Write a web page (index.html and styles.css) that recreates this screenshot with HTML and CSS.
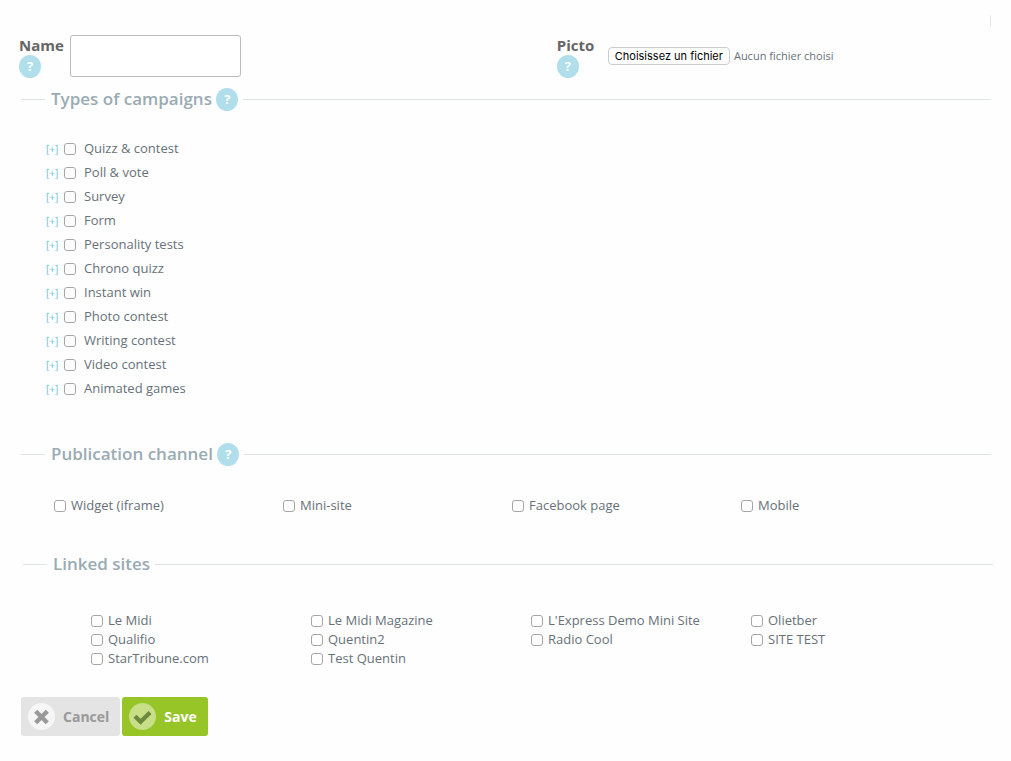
FILE: index.html
```
<!DOCTYPE html>
<html lang="en">
<head>
    <meta charset="UTF-8">
    <meta name="viewport" content="width=device-width, initial-scale=1.0">
    <title>Campaign category</title>
    <link rel="stylesheet" href="styles.css">
</head>
<body>
    <div class="corner"></div>
    <form id="categoryForm">
        <div class="top-row">
            <div class="field">
                <div class="field-label">
                    <label for="name">Name</label>
                    <button type="button" class="help">?</button>
                </div>
                <input type="text" id="name" name="name" class="name-input">
            </div>
            <div class="field">
                <div class="field-label">
                    <label for="picto">Picto</label>
                    <button type="button" class="help">?</button>
                </div>
                <div class="file">
                    <input type="file" id="picto" name="picto" class="file-input">
                    <button type="button" id="pictoButton" class="file-button">Choisissez un fichier</button>
                    <span id="pictoName" class="file-name">Aucun fichier choisi</span>
                </div>
            </div>
        </div>

        <fieldset class="types">
            <legend>Types of campaigns <button type="button" class="help">?</button></legend>
            <ul class="type-list">
                <li><a href="#">[+]</a><label><input type="checkbox" name="type">Quizz &amp; contest</label></li>
                <li><a href="#">[+]</a><label><input type="checkbox" name="type">Poll &amp; vote</label></li>
                <li><a href="#">[+]</a><label><input type="checkbox" name="type">Survey</label></li>
                <li><a href="#">[+]</a><label><input type="checkbox" name="type">Form</label></li>
                <li><a href="#">[+]</a><label><input type="checkbox" name="type">Personality tests</label></li>
                <li><a href="#">[+]</a><label><input type="checkbox" name="type">Chrono quizz</label></li>
                <li><a href="#">[+]</a><label><input type="checkbox" name="type">Instant win</label></li>
                <li><a href="#">[+]</a><label><input type="checkbox" name="type">Photo contest</label></li>
                <li><a href="#">[+]</a><label><input type="checkbox" name="type">Writing contest</label></li>
                <li><a href="#">[+]</a><label><input type="checkbox" name="type">Video contest</label></li>
                <li><a href="#">[+]</a><label><input type="checkbox" name="type">Animated games</label></li>
            </ul>
        </fieldset>

        <fieldset class="channels">
            <legend>Publication channel <button type="button" class="help">?</button></legend>
            <div class="channel-list">
                <label><input type="checkbox" name="channel">Widget (iframe)</label>
                <label><input type="checkbox" name="channel">Mini-site</label>
                <label><input type="checkbox" name="channel">Facebook page</label>
                <label><input type="checkbox" name="channel">Mobile</label>
            </div>
        </fieldset>

        <fieldset class="sites">
            <legend>Linked sites</legend>
            <div class="site-list">
                <label><input type="checkbox" name="site">Le Midi</label>
                <label><input type="checkbox" name="site">Le Midi Magazine</label>
                <label><input type="checkbox" name="site">L'Express Demo Mini Site</label>
                <label><input type="checkbox" name="site">Olietber</label>
                <label><input type="checkbox" name="site">Qualifio</label>
                <label><input type="checkbox" name="site">Quentin2</label>
                <label><input type="checkbox" name="site">Radio Cool</label>
                <label><input type="checkbox" name="site">SITE TEST</label>
                <label><input type="checkbox" name="site">StarTribune.com</label>
                <label><input type="checkbox" name="site">Test Quentin</label>
            </div>
        </fieldset>

        <div class="actions">
            <button type="button" class="btn cancel">
                <svg width="27" height="27" viewBox="0 0 27 27" aria-hidden="true">
                    <circle cx="13.5" cy="13.5" r="13.5" fill="#f6f6f6"/>
                    <path d="M7.7 8.2l11.6 11.6M19.3 8.2L7.7 19.8" stroke="#999" stroke-width="4.4"/>
                </svg>
                Cancel
            </button>
            <button type="submit" class="btn save">
                <svg width="27" height="27" viewBox="0 0 27 27" aria-hidden="true">
                    <circle cx="13.5" cy="13.5" r="13.5" fill="#c8de87"/>
                    <path d="M6 13.2l5.6 5.6L21 9.4" fill="none" stroke="#6d8a3c" stroke-width="4.2"/>
                </svg>
                Save
            </button>
        </div>
    </form>

    <script>
        const picto = document.getElementById("picto");
        const pictoName = document.getElementById("pictoName");

        document.getElementById("pictoButton").addEventListener("click", () => picto.click());

        picto.addEventListener("change", () => {
            pictoName.textContent = picto.files.length ? picto.files[0].name : "Aucun fichier choisi";
        });

        document.getElementById("categoryForm").addEventListener("submit", (event) => {
            event.preventDefault();
        });
    </script>
</body>
</html>
```
FILE: styles.css
```
* {
    box-sizing: border-box;
}

body {
    margin: 0;
    padding: 15px 0 24px;
    background-color: #fefefe;
    color: #677179;
    font-family: "Open Sans", Arial, sans-serif;
    font-size: 13px;
}

.corner {
    width: 3px;
    height: 12px;
    margin: 0 18px 8px auto;
    border-left: 1px solid #dfe7e6;
    border-radius: 3px;
}

/* Name and picto */
.top-row {
    display: grid;
    grid-template-columns: 5fr 4fr;
    padding: 0 24px 0 19px;
}

.field {
    display: flex;
    align-items: flex-start;
}

.field-label {
    width: 51px;
    font-size: 15px;
    font-weight: bold;
    line-height: 20px;
    color: #666;
}

.field-label label {
    display: block;
}

.help {
    width: 22px;
    height: 23px;
    padding: 0;
    border: none;
    border-radius: 50%;
    background-color: #b0dfeb;
    color: #fff;
    font: bold 13px/23px "Open Sans", Arial, sans-serif;
    text-align: center;
    vertical-align: top;
    cursor: pointer;
}

.name-input {
    width: 171px;
    height: 42px;
    padding: 8px;
    border: 1px solid #bbb;
    border-radius: 3px;
    background-color: #fff;
    font: inherit;
}

.file {
    display: flex;
    align-items: center;
    height: 42px;
    gap: 4px;
}

.file-input {
    display: none;
}

.file-button {
    height: 18px;
    padding: 0 6px;
    border: 1px solid #ccc;
    border-radius: 4px;
    background-color: #fff;
    color: #000;
    font: 11px/16px Inter, Arial, sans-serif;
}

.file-name {
    font-size: 11px;
    line-height: 14px;
}

/* Sections */
fieldset {
    margin: 0 20px 0 21px;
    padding: 0;
    border: none;
    border-top: 1px solid #dce3e3;
}

legend {
    height: 24px;
    margin-left: 24px;
    padding: 0 5px 0 6px;
    color: #9aabb3;
    font-size: 17px;
    font-weight: 600;
    line-height: 24px;
}

legend .help {
    margin-top: 1px;
}

input[type="checkbox"] {
    appearance: none;
    flex: none;
    width: 12px;
    height: 12px;
    margin: 0;
    border: 1px solid #a6a6a6;
    border-radius: 3px;
    background-color: #fff;
}

input[type="checkbox"]:checked {
    background-color: #6cc3e0;
}

fieldset label {
    display: flex;
    align-items: center;
    gap: 5px;
}

.types {
    margin-top: 9px;
}

.type-list {
    margin: 0;
    padding: 25px 0 42px 25px;
    list-style: none;
}

.type-list li {
    display: flex;
    align-items: center;
    height: 24px;
    gap: 6px;
}

.type-list a {
    width: 12px;
    padding-top: 2px;
    color: #6cc3e0;
    font-size: 10px;
    text-decoration: none;
}

.type-list label {
    gap: 8px;
}

.type-list input[type="checkbox"] {
    margin-top: 2px;
}

.channel-list {
    display: grid;
    grid-template-columns: repeat(4, 1fr);
    padding: 30px 21px 37px 33px;
    line-height: 19px;
}

.sites {
    margin: 0 18px 0 23px;
}

.site-list {
    display: grid;
    grid-template-columns: repeat(4, 1fr);
    padding: 35px 22px 29px 68px;
    line-height: 19px;
}

/* Buttons */
.actions {
    display: flex;
    gap: 2px;
    padding-left: 21px;
}

.btn {
    display: flex;
    align-items: center;
    gap: 8px;
    height: 39px;
    padding: 0 11px 0 7px;
    border: none;
    border-radius: 3px;
    font: bold 14px "Open Sans", Arial, sans-serif;
    cursor: pointer;
}

.cancel {
    background-color: #e4e4e4;
    color: #999;
}

.save {
    background-color: #97c527;
    color: #fff;
}
```
